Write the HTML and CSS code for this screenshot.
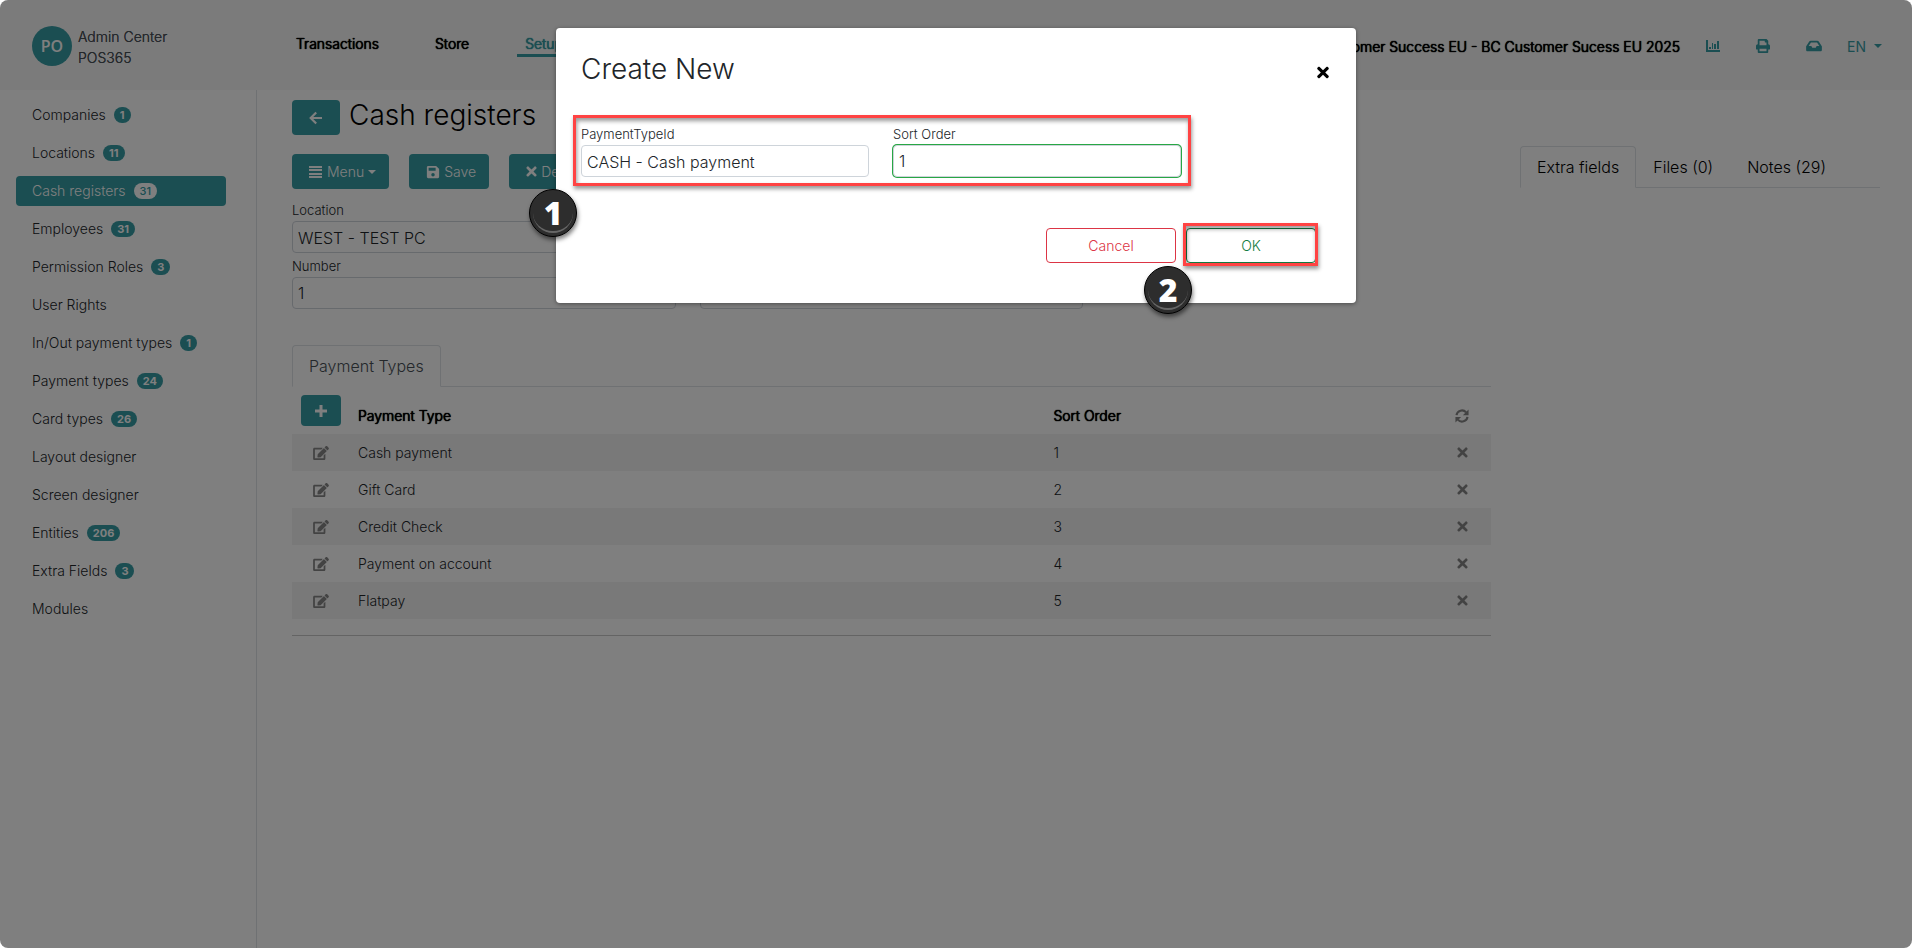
FILE: index.html
```html
<!DOCTYPE html>
<html lang="en">

<head>
    <meta charset="UTF-8">
    <meta name="viewport" content="width=device-width, initial-scale=1.0">
    <title>Cash registers - Admin Center</title>
    <link rel="stylesheet" href="styles.css">
</head>

<body>

    <!-- Icons -->
    <svg class="sprite" aria-hidden="true">
        <symbol id="i-times" viewBox="0 0 352 512">
            <path d="M243 256l100-100c12-12 12-32 0-44l-22-22c-12-12-32-12-44 0L176 190 76 90c-12-12-32-12-44 0L9 112c-12 12-12 32 0 44l101 100L9 356c-12 12-12 32 0 44l23 22c12 12 32 12 44 0l100-100 101 100c12 12 32 12 44 0l22-22c12-12 12-32 0-44z" />
        </symbol>
        <symbol id="i-edit" viewBox="0 0 576 512">
            <path d="M402 83l91 91c4 4 4 10 0 14L273 408l-94 10c-12 2-23-9-21-21l10-94L388 83c4-4 10-4 14 0zM564 60l-49-49c-15-15-40-15-55 0l-35 35c-4 4-4 10 0 14l91 91c4 4 10 4 14 0l35-35c14-16 14-41-1-56zM384 346v102H64V128h230c3 0 6-1 8-4l40-40c8-7 3-20-8-20H48C22 64 0 86 0 112v352c0 27 22 48 48 48h352c27 0 48-21 48-48V306c0-11-13-16-20-8l-40 40c-3 2-4 5-4 8z" />
        </symbol>
        <symbol id="i-sync" viewBox="0 0 16 16">
            <path d="M1.700 7a6.300 6.300 0 0 1 11-3.200M14.300 9a6.300 6.300 0 0 1-11 3.200" fill="none" stroke="currentColor" stroke-width="2.400" />
            <path d="M15.500 0.500v6.500H9zM0.500 15.500V9H7z" />
        </symbol>
    </svg>

    <div class="page">
        <header class="topbar">
            <a class="brand" href="#">
                <span class="avatar">PO</span>
                <span class="brand-text">Admin Center<br>POS365</span>
            </a>
            <nav class="topnav">
                <a href="#">Transactions</a>
                <a href="#">Store</a>
                <a class="active" href="#">Setup</a>
            </nav>
            <div class="topbar-right">
                <span class="company">BC Customer Success EU - BC Customer Sucess EU 2025</span>
                <a href="#" aria-label="Reports">
                    <svg class="icon" viewBox="0 0 14 14">
                        <path d="M0 1h2v10h12v2H0zM3 8h2v2H3zM6 4h1v6H6zM8 5h2v5H8zM11 2h2v8h-2z" />
                    </svg>
                </a>
                <a href="#" aria-label="Print">
                    <svg class="icon" viewBox="0 0 512 512">
                        <path fill-rule="evenodd" d="M448 192V77c0-9-3-17-9-23l-45-45c-6-6-14-9-23-9H96C78 0 64 14 64 32v160c-35 0-64 29-64 64v112c0 9 7 16 16 16h48v96c0 18 14 32 32 32h320c18 0 32-14 32-32v-96h48c9 0 16-7 16-16V256c0-35-29-64-64-64zM384 448H128v-96h256zM384 224H128V64h192v48c0 9 7 16 16 16h48z" />
                    </svg>
                </a>
                <a href="#" aria-label="Inbox">
                    <svg class="icon icon-wide" viewBox="0 0 576 512">
                        <path fill-rule="evenodd" d="M568 254L462 95c-12-19-33-31-56-31H170c-23 0-44 12-56 31L8 254c-5 8-8 17-8 27v119c0 26 22 48 48 48h480c26 0 48-22 48-48V281c0-10-3-19-8-27zM177 128h222l85 128H384l-32 64H224l-32-64H92z" />
                    </svg>
                </a>
                <button class="lang" type="button">EN <span class="caret"></span></button>
            </div>
        </header>

        <div class="layout">
            <aside class="sidebar">
                <a href="#">Companies <span class="badge">1</span></a>
                <a href="#">Locations <span class="badge">11</span></a>
                <a class="active" href="#">Cash registers <span class="badge">31</span></a>
                <a href="#">Employees <span class="badge">31</span></a>
                <a href="#">Permission Roles <span class="badge">3</span></a>
                <a href="#">User Rights</a>
                <a href="#">In/Out payment types <span class="badge">1</span></a>
                <a href="#">Payment types <span class="badge">24</span></a>
                <a href="#">Card types <span class="badge">26</span></a>
                <a href="#">Layout designer</a>
                <a href="#">Screen designer</a>
                <a href="#">Entities <span class="badge">206</span></a>
                <a href="#">Extra Fields <span class="badge">3</span></a>
                <a href="#">Modules</a>
            </aside>

            <main class="content">
                <div class="title-row">
                    <button class="btn btn-back" type="button" aria-label="Back">
                        <svg class="icon-sm" viewBox="0 0 14 14">
                            <path d="M7.200 1.500L1.700 7l5.500 5.500M2 7h11" fill="none" stroke="currentColor" stroke-width="2.200" />
                        </svg>
                    </button>
                    <h1>Cash registers</h1>
                </div>

                <div class="toolbar">
                    <button class="btn" type="button">
                        <svg class="icon-sm" viewBox="0 0 14 14">
                            <path d="M0 1h13v2H0zM0 4h13v2H0zM0 8h13v2H0zM0 11h13v2H0z" />
                        </svg>
                        Menu<span class="caret"></span>
                    </button>
                    <button class="btn" type="button">
                        <svg class="icon-sm" viewBox="0 0 448 512">
                            <path fill-rule="evenodd" d="M434 130l-84-84c-9-9-21-14-34-14H48C22 32 0 54 0 80v352c0 26 22 48 48 48h352c26 0 48-22 48-48V164c0-13-5-25-14-34zM64 96h256v112H64zM224 288a64 64 0 1 1 0 128 64 64 0 0 1 0-128z" />
                        </svg>
                        Save
                    </button>
                    <button class="btn" type="button">
                        <svg class="icon-x"><use href="#i-times" /></svg>
                        Delete
                    </button>
                </div>

                <form class="fields">
                    <div class="field">
                        <label for="location">Location</label>
                        <input class="lookup" type="text" id="location" value="WEST - TEST PC">
                    </div>
                    <div class="field field-first">
                        <label for="number">Number</label>
                        <input type="text" id="number" value="1">
                    </div>
                    <div class="field">
                        <label for="name">Name</label>
                        <input type="text" id="name">
                    </div>
                </form>

                <div class="tabs">
                    <a class="active" href="#">Payment Types</a>
                </div>

                <table class="grid">
                    <thead>
                        <tr>
                            <th class="col-edit">
                                <button class="btn btn-add" type="button" aria-label="Add">
                                    <svg class="icon-sm" viewBox="0 0 14 14">
                                        <path d="M5.500 1h3v4.500H13v3H8.500V13h-3V8.500H1v-3h4.500z" />
                                    </svg>
                                </button>
                            </th>
                            <th class="col-type">Payment Type</th>
                            <th>Sort Order</th>
                            <th class="col-del">
                                <button type="button" aria-label="Refresh"><svg class="icon-sync"><use href="#i-sync" /></svg></button>
                            </th>
                        </tr>
                    </thead>
                    <tbody>
                        <tr>
                            <td class="col-edit"><button type="button" aria-label="Edit"><svg class="icon-edit"><use href="#i-edit" /></svg></button></td>
                            <td>Cash payment</td>
                            <td>1</td>
                            <td class="col-del"><button type="button" aria-label="Remove"><svg class="icon-x"><use href="#i-times" /></svg></button></td>
                        </tr>
                        <tr>
                            <td class="col-edit"><button type="button" aria-label="Edit"><svg class="icon-edit"><use href="#i-edit" /></svg></button></td>
                            <td>Gift Card</td>
                            <td>2</td>
                            <td class="col-del"><button type="button" aria-label="Remove"><svg class="icon-x"><use href="#i-times" /></svg></button></td>
                        </tr>
                        <tr>
                            <td class="col-edit"><button type="button" aria-label="Edit"><svg class="icon-edit"><use href="#i-edit" /></svg></button></td>
                            <td>Credit Check</td>
                            <td>3</td>
                            <td class="col-del"><button type="button" aria-label="Remove"><svg class="icon-x"><use href="#i-times" /></svg></button></td>
                        </tr>
                        <tr>
                            <td class="col-edit"><button type="button" aria-label="Edit"><svg class="icon-edit"><use href="#i-edit" /></svg></button></td>
                            <td>Payment on account</td>
                            <td>4</td>
                            <td class="col-del"><button type="button" aria-label="Remove"><svg class="icon-x"><use href="#i-times" /></svg></button></td>
                        </tr>
                        <tr>
                            <td class="col-edit"><button type="button" aria-label="Edit"><svg class="icon-edit"><use href="#i-edit" /></svg></button></td>
                            <td>Flatpay</td>
                            <td>5</td>
                            <td class="col-del"><button type="button" aria-label="Remove"><svg class="icon-x"><use href="#i-times" /></svg></button></td>
                        </tr>
                    </tbody>
                </table>
                <hr>
            </main>

            <aside class="details">
                <div class="tabs">
                    <a class="active" href="#">Extra fields</a>
                    <a href="#">Files (0)</a>
                    <a href="#">Notes (29)</a>
                </div>
            </aside>
        </div>

        <!-- Dialog -->
        <div class="overlay">
            <div class="modal" role="dialog" aria-labelledby="modal-title">
                <div class="modal-header">
                    <h2 id="modal-title">Create New</h2>
                    <button class="close" type="button" aria-label="Close"><svg class="icon-close"><use href="#i-times" /></svg></button>
                </div>
                <form class="modal-form">
                    <div class="modal-fields">
                        <div class="field">
                            <label for="payment-type">PaymentTypeId</label>
                            <input class="lookup" type="text" id="payment-type" value="CASH - Cash payment">
                        </div>
                        <div class="field">
                            <label for="sort-order">Sort Order</label>
                            <input class="focused" type="text" id="sort-order" value="1">
                        </div>
                        <span class="mark mark-fields"></span>
                        <span class="step step-one">1</span>
                    </div>
                    <div class="modal-actions">
                        <button class="btn-outline cancel" type="button">Cancel</button>
                        <div class="ok-wrap">
                            <button class="btn-outline ok" type="submit">OK</button>
                            <span class="mark mark-ok"></span>
                            <span class="step step-two">2</span>
                        </div>
                    </div>
                </form>
            </div>
        </div>
    </div>

</body>

</html>
```
FILE: styles.css
```css
* {
    margin: 0;
    padding: 0;
    box-sizing: border-box;
}

body {
    background: #fff;
    color: #212529;
    font-family: Inter, 'Liberation Sans', sans-serif;
    font-size: 14px;
    font-weight: 300;
}

a {
    color: inherit;
    text-decoration: none;
}

button {
    background: none;
    border: none;
    font: inherit;
    color: inherit;
    cursor: pointer;
}

svg {
    display: block;
    fill: currentColor;
}

.sprite {
    position: absolute;
    width: 0;
    height: 0;
}

.page {
    position: relative;
    display: flex;
    flex-direction: column;
    min-height: 100vh;
    border-radius: 8px;
    overflow: hidden;
}

/* Top bar */
.topbar {
    display: flex;
    height: 90px;
    padding: 0 30px 0 32px;
    background: #f7f7f7;
}

.brand {
    display: flex;
    gap: 6px;
    width: 264px;
    padding-top: 26px;
    color: #495057;
    line-height: 21px;
    text-shadow: 0 0 0 currentColor;
}

.avatar {
    width: 40px;
    height: 40px;
    border-radius: 50%;
    background: #369ca4;
    color: #fff;
    font-family: 'Open Sans', sans-serif;
    font-size: 16px;
    font-weight: 600;
    line-height: 40px;
    text-align: center;
    text-shadow: none;
}

.topnav {
    display: flex;
    gap: 40px;
    padding-top: 32px;
}

.topnav,
.company,
.grid th {
    color: #000;
    font-weight: 300;
    text-shadow: 0 0 0 currentColor, 0 0 1px currentColor, 0 0 1px currentColor;
}

.topnav a {
    height: 25px;
    padding: 0 8px;
    line-height: 24px;
}

.topnav a.active {
    color: #369ca4;
    border-bottom: 3px solid #369ca4;
}

.brand + .topnav {
    margin-left: -8px;
}

.topbar-right {
    display: flex;
    align-items: center;
    gap: 36px;
    height: 92px;
    margin-left: auto;
    color: #369ca4;
}

.company {
    margin-right: -10px;
}

.icon {
    width: 14px;
    height: 14px;
}

.icon-wide {
    width: 16px;
}

.lang {
    display: flex;
    align-items: center;
    gap: 8px;
    margin-left: -11px;
    font-weight: 400;
}

.caret {
    border-top: 4px solid;
    border-left: 4px solid transparent;
    border-right: 4px solid transparent;
}

/* Layout */
.layout {
    display: flex;
    flex: 1;
}

.sidebar {
    display: flex;
    flex-direction: column;
    gap: 8px;
    width: 257px;
    padding: 10px 30px 10px 16px;
    border-right: 1px solid #dee2e6;
}

.sidebar a {
    display: flex;
    align-items: center;
    gap: 8px;
    height: 30px;
    padding: 0 16px 2px;
    border-radius: 4px;
}

.sidebar .active {
    background: #369ca4;
    color: #fff;
}

.badge {
    margin-top: 1px;
    padding: 2px 6px;
    border-radius: 8px;
    background: #369ca4;
    color: #fff;
    font-size: 11px;
    font-weight: 700;
    line-height: 12px;
}

.active .badge {
    background: #fff;
    color: #369ca4;
    font-weight: 500;
}

.content {
    flex: 1;
    padding: 10px 29px 0 35px;
}

.title-row {
    display: flex;
    align-items: center;
    gap: 9px;
    height: 35px;
}

h1,
h2 {
    font-size: 28px;
    font-weight: 300;
    line-height: 34px;
}

h1 {
    color: #000;
    padding-bottom: 6px;
}

.toolbar {
    display: flex;
    gap: 20px;
    margin: 19px 0 11px;
}

.btn {
    display: flex;
    align-items: center;
    gap: 4px;
    height: 35px;
    padding: 0 13px 0 17px;
    border-radius: 4px;
    background: #369ca4;
    color: #fff;
}

.btn-back {
    padding: 0 17px;
}

.icon-sm {
    width: 14px;
    height: 14px;
}

.icon-x {
    width: 11px;
    height: 15px;
}

.fields {
    display: grid;
    grid-template-columns: repeat(3, 1fr);
    gap: 3px 24px;
}

.field label {
    display: block;
    font-size: 13px;
    line-height: 21px;
}

.field input {
    display: block;
    width: 100%;
    height: 32px;
    padding: 0 5px;
    border: 1px solid #ced4da;
    border-radius: 4px;
    background: #fff;
    color: #212529;
    font: inherit;
    font-size: 16px;
    outline: none;
}

.field .lookup {
    padding-top: 2px;
}

.field-first {
    grid-column: 1;
}

.tabs {
    display: flex;
    border-bottom: 1px solid #dee2e6;
    font-size: 16px;
    color: #000;
}

.tabs a {
    height: 41px;
    padding: 0 17px;
    line-height: 42px;
}

.tabs .active {
    margin-bottom: -1px;
    height: 42px;
    padding: 0 16px;
    border: 1px solid #dee2e6;
    border-bottom-color: #fff;
    border-radius: 4px 4px 0 0;
    background: #fff;
    line-height: 40px;
}

.content .tabs {
    margin-top: 36px;
    color: #495057;
}

/* Payment types */
.grid {
    width: 100%;
    border-collapse: collapse;
    table-layout: fixed;
}

.grid th,
.grid td {
    height: 37px;
    padding: 0 8px;
    text-align: left;
}

.grid th {
    height: 47px;
    padding-top: 10px;
}

.grid .col-edit,
.grid .col-del {
    width: 58px;
    color: #868686;
}

.grid th.col-edit {
    padding-top: 0;
}

.grid tbody tr:nth-child(odd) {
    background: #f2f2f2;
}

.grid button {
    display: flex;
    align-items: center;
    justify-content: center;
    margin: 0 auto;
}

.grid .col-type {
    width: 58%;
}

.grid .btn-add {
    width: 40px;
    height: 31px;
    padding: 0;
    color: #fff;
}

.icon-edit {
    width: 16px;
    height: 14px;
}

.icon-sync {
    width: 14px;
    height: 14px;
}

hr {
    margin-top: 16px;
    border: none;
    border-top: 1px solid #c8c8c8;
}

.details {
    width: 392px;
    padding: 56px 32px 0 0;
}

/* Dialog */
.overlay {
    position: absolute;
    inset: 0;
    background: rgba(0, 0, 0, 0.5);
}

.modal {
    width: 800px;
    margin: 28px auto;
    padding: 23px 26px 40px 25px;
    border-radius: 4px;
    background: #fff;
    box-shadow: 0 1px 4px rgba(0, 0, 0, 0.4);
}

.modal-header {
    display: flex;
    justify-content: space-between;
    height: 73px;
}

.modal-header h2 {
    line-height: 36px;
}

.close {
    align-self: flex-start;
    padding: 13px 0 0;
    color: #000;
}

.icon-close {
    width: 14px;
    height: 17px;
}

.modal-fields {
    position: relative;
    display: grid;
    grid-template-columns: repeat(2, 288px);
    gap: 24px;
}

.focused {
    box-shadow: 0 0 0 1px #28a745;
}

.modal-actions {
    display: flex;
    justify-content: flex-end;
    gap: 10px;
    margin-top: 51px;
    padding-right: 14px;
}

.ok-wrap {
    position: relative;
}

.btn-outline {
    width: 130px;
    height: 35px;
    border: 1px solid;
    border-radius: 4px;
    background: #fff;
}

.cancel {
    color: #dc3545;
}

.ok {
    color: #107c41;
}

/* Step marks */
.mark {
    position: absolute;
    border: 3px solid #ff4343;
    box-shadow: 1px 3px 4px rgba(0, 0, 0, 0.4), inset 1px 3px 4px rgba(0, 0, 0, 0.4);
    pointer-events: none;
}

.mark-fields {
    inset: -9px -9px -9px -8px;
    width: 618px;
}

.mark-ok {
    inset: -5px -2px -3px -3px;
}

.step {
    position: absolute;
    width: 48px;
    height: 48px;
    border: 1px solid #000;
    border-radius: 50%;
    background: #2d2d2d;
    box-shadow: 1px 3px 4px rgba(0, 0, 0, 0.5);
    color: #fff;
    font-family: 'Open Sans', sans-serif;
    font-size: 32px;
    font-weight: 800;
    line-height: 46px;
    text-align: center;
}

/* Glossy rim at the bottom of the circle */
.step::after {
    content: '';
    position: absolute;
    inset: 3px;
    border-radius: 50%;
    border-bottom: 2px solid #666;
}

.step-one {
    left: -52px;
    top: 65px;
}

.step-two {
    left: -42px;
    top: 38px;
}
```
